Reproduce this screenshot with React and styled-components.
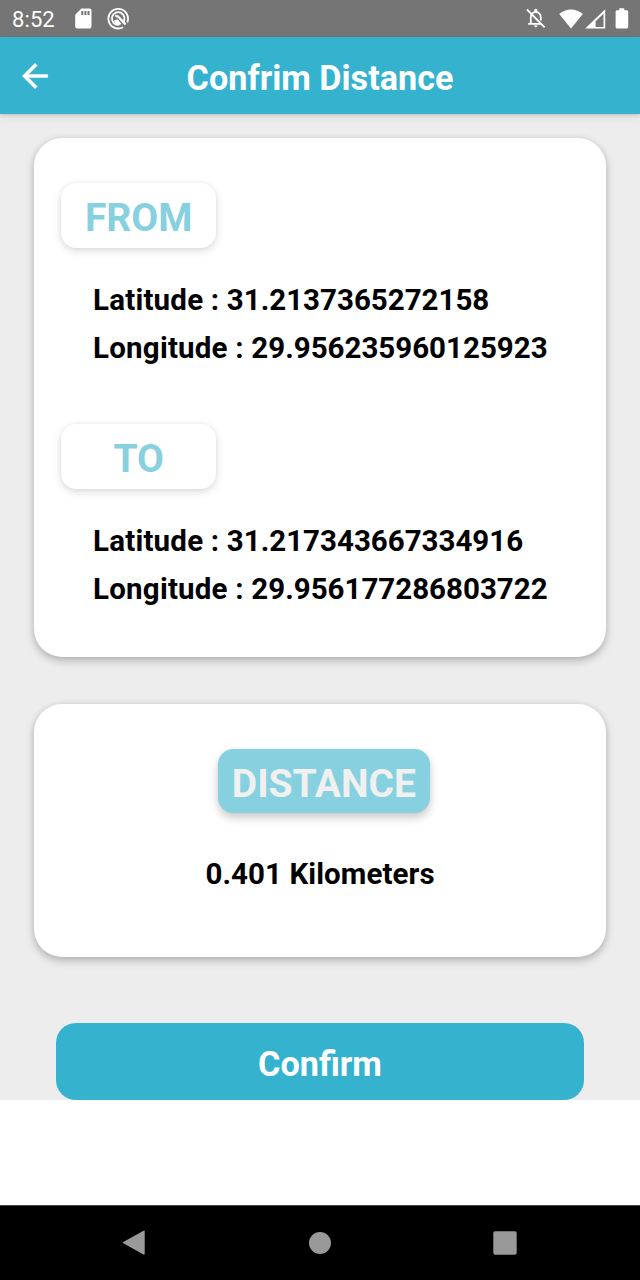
import React from 'react';
import styled, { createGlobalStyle } from 'styled-components';

const GlobalStyle = createGlobalStyle`
  * {
    box-sizing: border-box;
  }

  body {
    margin: 0;
    background-color: #fff;
    font-family: Roboto, sans-serif;
  }
`;

const Screen = styled.div`
  display: flex;
  flex-direction: column;
  width: 640px;
  height: 1280px;
  overflow: hidden;
  background-color: #fff;
`;

const StatusBar = styled.div`
  display: flex;
  justify-content: space-between;
  flex: none;
  height: 37.4px;
  padding: 0 11.5px 0 12px;
  background-color: #757575;
`;

const StatusGroup = styled.div`
  display: flex;
  align-items: center;
  height: 37.6px;
`;

const Clock = styled.span`
  width: 63px;
  padding-top: 2px;
  color: #fff;
  font-size: 22px;
  line-height: 26px;
  letter-spacing: 0.1px;
`;

const StatusIcon = styled.svg`
  display: block;
  flex: none;
  margin-left: ${(props) => props.$gap || 0}px;
`;

const Header = styled.header`
  display: grid;
  grid-template-columns: 72px 1fr 72px;
  align-items: center;
  flex: none;
  height: 76.6px;
  background-color: #34b2ce;
  box-shadow: 0 1px 3px rgba(0, 0, 0, 0.14), 0 3px 9px rgba(0, 0, 0, 0.08);
  z-index: 1;
`;

const BackButton = styled.button`
  display: flex;
  width: 38px;
  height: 38px;
  margin: 0 0 0 16px;
  padding: 0;
  border: 0;
  background: none;
`;

const Title = styled.h1`
  margin: 5px 0 0;
  color: #fff;
  font-size: 34.2px;
  font-weight: 700;
  line-height: 40px;
  text-align: center;
  white-space: nowrap;
`;

const Content = styled.main`
  display: flex;
  flex-direction: column;
  flex: none;
  height: 986px;
  padding: 24.5px 34.4px 0;
  background-color: #ededed;
`;

const Card = styled.section`
  flex: none;
  height: ${(props) => props.$height}px;
  margin-bottom: ${(props) => props.$gap}px;
  padding: 45px 26.5px 0;
  border-radius: 28px;
  background-color: #fff;
  box-shadow: 0 4px 9px rgba(0, 0, 0, 0.22), 0 0 6px rgba(0, 0, 0, 0.08);
`;

const Place = styled.div`
  height: 241px;
`;

const Badge = styled.div`
  width: ${(props) => (props.$filled ? 212 : 155.5)}px;
  height: 64.5px;
  margin-left: ${(props) => (props.$filled ? 157 : 0)}px;
  padding-top: 12px;
  border-radius: 15.5px;
  background-color: ${(props) => (props.$filled ? '#87d0df' : '#fff')};
  box-shadow: ${(props) =>
    props.$filled
      ? '0 5px 10px rgba(0, 0, 0, 0.2), 0 0 4px rgba(0, 0, 0, 0.04)'
      : '0 3px 9px rgba(0, 0, 0, 0.13), 0 0 5px rgba(0, 0, 0, 0.06)'};
  color: ${(props) => (props.$filled ? '#f0f0f0' : '#87d0df')};
  font-size: 39px;
  font-weight: 700;
  line-height: 46px;
  text-align: center;
  white-space: nowrap;
`;

const Coordinates = styled.div`
  padding: 28.5px 0 0 32.2px;
`;

const Value = styled.p`
  margin: 0;
  color: #000;
  font-size: 29.5px;
  font-weight: 700;
  line-height: 48px;
  white-space: nowrap;
`;

const ValueLabel = styled.span`
  letter-spacing: 0.2px;
`;

const DistanceValue = styled(Value)`
  margin-top: 37px;
  letter-spacing: 0.08px;
  text-align: center;
`;

const ConfirmButton = styled.button`
  flex: none;
  height: 77px;
  margin: 0 21.5px;
  padding: 6px 0 0;
  border: 0;
  border-radius: 20px;
  background-color: #34b2ce;
  color: #fff;
  font-family: inherit;
  font-size: 34.2px;
  font-weight: 700;
  line-height: 40px;
`;

const NavBar = styled.nav`
  display: flex;
  justify-content: space-between;
  align-items: center;
  flex: none;
  height: 75px;
  margin-top: auto;
  padding: 0 123px 0 122px;
  border-top: 1px solid #444;
  background-color: #000;
`;

const places = [
  { label: 'FROM', latitude: '31.2137365272158', longitude: '29.956235960125923' },
  { label: 'TO', latitude: '31.217343667334916', longitude: '29.956177286803722' },
];

const StatusIcons = () => (
  <StatusBar>
    <StatusGroup>
      <Clock>8:52</Clock>
      <StatusIcon width="17" height="21" viewBox="0 0 17 21">
        <path
          fill="#fff"
          fillRule="evenodd"
          d="M6.4.5H14.5q2 0 2 2v16q0 2-2 2H2.2q-2 0-2-2V6.7zM6.3 3v4h2V3zm3.1 0v4h2V3zm3.1 0v4h2V3z"
        />
      </StatusIcon>
      <StatusIcon $gap={14.5} width="23" height="23" viewBox="0 0 23 23" fill="none" stroke="#fff">
        <path strokeWidth="1.8" d="M20.3 15.3A9.8 9.8 0 1 0 16 20.2" />
        <path strokeWidth="1.8" d="M15.9 15.7A6.3 6.3 0 1 0 11.5 17.8" />
        <path strokeWidth="2.2" d="M8.3 8.9C10.5 8.8 12 10 13 11.5L18.6 17.6" />
        <path fill="#fff" stroke="none" d="M7 13.5L10.5 12.2L14.5 17L11.5 18.4Q8 17.5 7 13.5z" />
      </StatusIcon>
    </StatusGroup>
    <StatusGroup>
      <StatusIcon width="20" height="21" viewBox="0 0 20 21" fill="none" stroke="#fff">
        <path strokeWidth="1.8" d="M4.8 15.5V9.5C4.8 6.5 6.8 4 9.8 4C12.8 4 14.8 6.5 14.8 9.5V12.5M2.2 15.8H15.5" />
        <path fill="#fff" stroke="none" d="M8.3 1.6q1.5-1.7 3 0V4h-3zM7.7 17.6h4.2q-2.1 3.4-4.2 0z" />
        <path strokeWidth="1.8" d="M1 1.5L18.6 19.4" />
      </StatusIcon>
      <StatusIcon $gap={12.5} width="24" height="20" viewBox="0 0 24 20">
        <path fill="#fff" d="M.2 5.1C7-1.1 17-1.1 23.8 5.1L12 19.4z" />
      </StatusIcon>
      <StatusIcon $gap={2} width="21" height="20" viewBox="0 0 21 20">
        <path fill="#fff" fillRule="evenodd" d="M20.2.2V19.6H.2zM18.5 4.8L10.6 12.3V18H18.5z" />
      </StatusIcon>
      <StatusIcon $gap={9} width="14" height="21" viewBox="0 0 14 21">
        <path
          fill="#fff"
          d="M4.3.3h5v2h2.5q1.4 0 1.4 1.4v15.4q0 1.4-1.4 1.4H2q-1.4 0-1.4-1.4V3.7Q.6 2.3 2 2.3h2.3z"
        />
      </StatusIcon>
    </StatusGroup>
  </StatusBar>
);

const App = () => {
  return (
    <>
      <GlobalStyle />
      <Screen>
        <StatusIcons />
        <Header>
          <BackButton aria-label="Back">
            <svg width="38" height="38" viewBox="0 0 24 24" fill="#fff" stroke="#fff" strokeWidth=".3">
              <path d="M20 11H7.83l5.59-5.59L12 4l-8 8 8 8 1.41-1.41L7.83 13H20z" />
            </svg>
          </BackButton>
          <Title>Confrim Distance</Title>
        </Header>

        <Content>
          <Card $height={518.5} $gap={47}>
            {places.map((place) => (
              <Place key={place.label}>
                <Badge>{place.label}</Badge>
                <Coordinates>
                  <Value>
                    <ValueLabel>Latitude : </ValueLabel>
                    {place.latitude}
                  </Value>
                  <Value>
                    <ValueLabel>Longitude : </ValueLabel>
                    {place.longitude}
                  </Value>
                </Coordinates>
              </Place>
            ))}
          </Card>

          <Card $height={253.5} $gap={65.5}>
            <Badge $filled>DISTANCE</Badge>
            <DistanceValue>0.401 Kilometers</DistanceValue>
          </Card>

          <ConfirmButton>Confirm</ConfirmButton>
        </Content>

        <NavBar>
          <svg width="24" height="26" viewBox="0 0 24 26">
            <path fill="#999" d="M21.5.7Q22.7 0 22.7 1.3V23.7Q22.7 25.4 21.4 24.5L1.3 13.2Q.3 12.5 1.3 11.9z" />
          </svg>
          <svg width="24" height="24" viewBox="0 0 24 24">
            <circle cx="12" cy="12" r="11" fill="#999" />
          </svg>
          <svg width="24" height="24" viewBox="0 0 24 24">
            <rect x=".3" y=".3" width="23.4" height="23.4" rx="1.8" fill="#999" />
          </svg>
        </NavBar>
      </Screen>
    </>
  );
};

export default App;
